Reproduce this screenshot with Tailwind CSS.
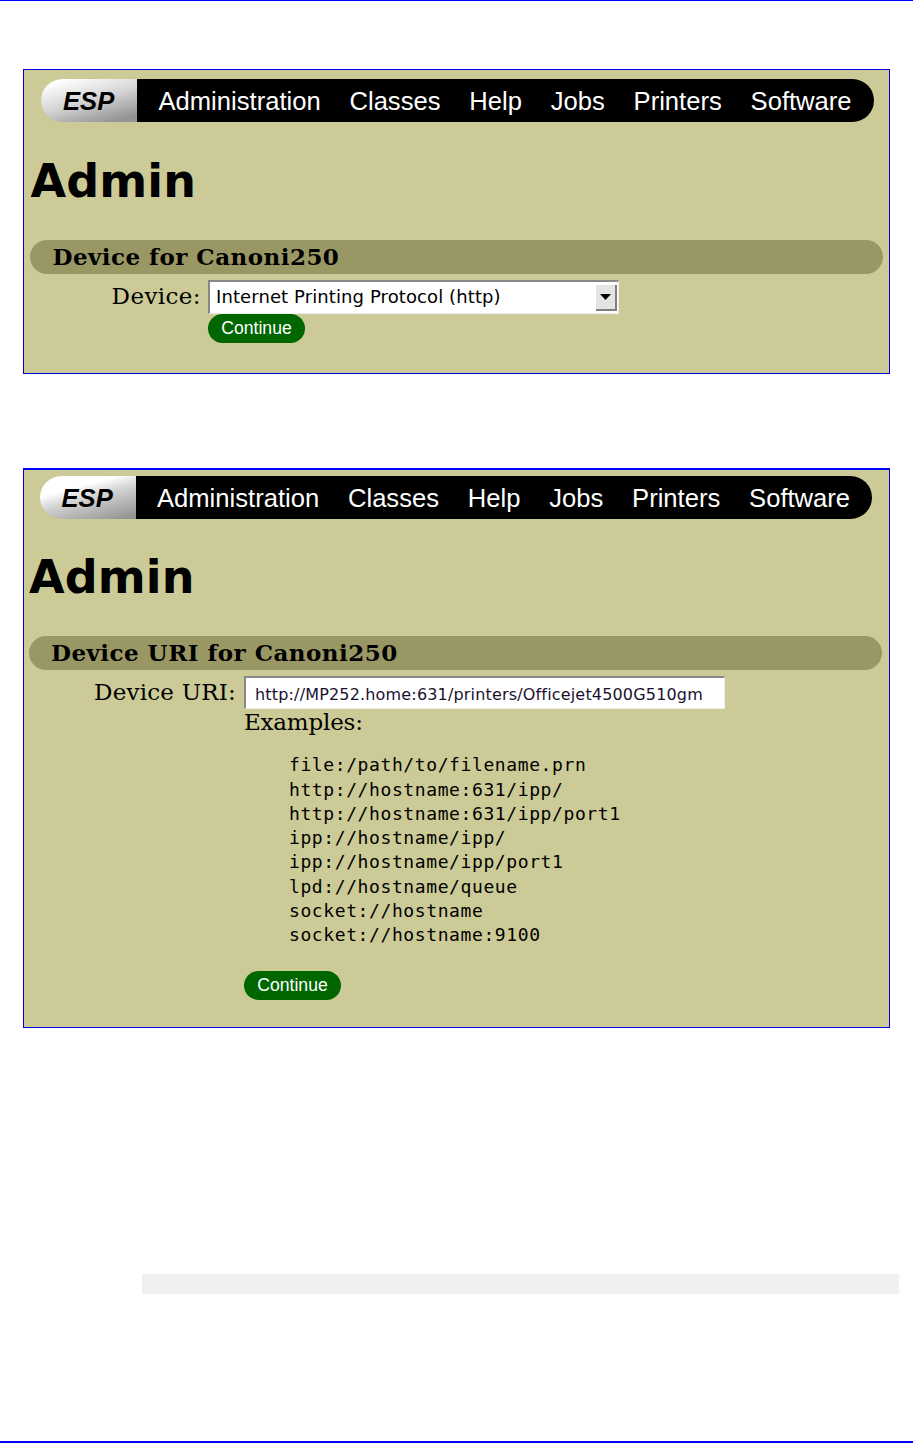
<!DOCTYPE html>
<html lang="en">
<head>
  <meta charset="UTF-8">
  <meta name="viewport" content="width=device-width, initial-scale=1.0">
  <title>Admin</title>
  <script src="https://cdn.jsdelivr.net/npm/@tailwindcss/browser@4"></script>
</head>
<body class="bg-white text-black">
  <div class="flex flex-col h-[1443px] border-t border-b-2 border-[#0000ff] overflow-hidden">

    <!-- Device -->
    <section class="shrink-0 mt-[68px] ml-[23px] w-[867px] h-[305px] border border-[#0000e0] bg-[#cccb97]">
      <nav class="flex mt-[8.5px] ml-[17px] w-[832.5px] h-[43.2px] text-white font-['Liberation_Sans',sans-serif] text-[25.6px] leading-[43px]">
        <div class="w-[96px] pt-[1.5px] pl-[22px] rounded-l-full bg-linear-165 from-white from-10% via-[#d4d4d4] via-50% to-[#949494] to-90% text-black font-bold italic">ESP</div>
        <div class="flex flex-1 gap-[28.8px] pt-[1.5px] pl-[21.5px] rounded-r-full bg-black">
          <a>Administration</a>
          <a>Classes</a>
          <a>Help</a>
          <a>Jobs</a>
          <a>Printers</a>
          <a>Software</a>
        </div>
      </nav>
      <h1 class="mt-[36px] ml-[6.5px] h-[46px] font-['DejaVu_Sans',sans-serif] font-bold text-[46px] leading-[46px] tracking-[0.1px]">Admin</h1>
      <h2 class="mt-[36px] ml-[6px] w-[853px] h-[34.6px] pl-[22.5px] rounded-full bg-[#999864] font-['DejaVu_Serif',serif] font-bold text-[23px] leading-[34px] tracking-[0.47px]">Device for Canoni250</h2>
      <div class="flex mt-[6px]">
        <label class="w-[177px] text-right font-['DejaVu_Serif',serif] text-[23px] leading-[33px] tracking-[0.4px]">Device:</label>
        <div class="ml-[7px]">
          <div class="flex items-center justify-between w-[411px] h-[33.5px] pl-[6px] pr-px bg-white border-t-[2.5px] border-l-[2.5px] border-r border-b border-t-[#888] border-l-[#888] border-r-[#eee] border-b-[#eee] font-['DejaVu_Sans',sans-serif] text-[18px] tracking-[0.1px]">
            <span class="pb-[2px]">Internet Printing Protocol (http)</span>
            <span class="flex items-center justify-center w-[21px] h-[26px] bg-[#e4e4e4] border-r-2 border-b-2 border-[#808080]">
              <svg class="w-[11px] h-[6px]" viewBox="0 0 11 6"><path d="M0 0h11L5.5 6z"/></svg>
            </span>
          </div>
          <button class="block w-[97px] h-[29px] rounded-full bg-[#006600] text-white font-['Liberation_Sans',sans-serif] text-[17.6px] leading-[29px]">Continue</button>
        </div>
      </div>
    </section>

    <!-- Device URI -->
    <section class="shrink-0 mt-[94px] ml-[23px] w-[867px] h-[560px] border border-t-2 border-[#0000e0] border-t-[#0000ff] bg-[#cccb97]">
      <nav class="flex mt-[5.5px] ml-[15.5px] w-[832.5px] h-[43.2px] text-white font-['Liberation_Sans',sans-serif] text-[25.6px] leading-[43px]">
        <div class="w-[96px] pt-[1.5px] pl-[22px] rounded-l-full bg-linear-165 from-white from-30% via-[#d4d4d4] via-50% to-[#949494] to-95% text-black font-bold italic">ESP</div>
        <div class="flex flex-1 gap-[28.8px] pt-[1.5px] pl-[21.5px] rounded-r-full bg-black">
          <a>Administration</a>
          <a>Classes</a>
          <a>Help</a>
          <a>Jobs</a>
          <a>Printers</a>
          <a>Software</a>
        </div>
      </nav>
      <h1 class="mt-[35.5px] ml-[5px] h-[46px] font-['DejaVu_Sans',sans-serif] font-bold text-[46px] leading-[46px] tracking-[0.1px]">Admin</h1>
      <h2 class="mt-[35.5px] ml-[4.5px] w-[853px] h-[34.6px] pl-[22.5px] rounded-full bg-[#999864] font-['DejaVu_Serif',serif] font-bold text-[23px] leading-[34px] tracking-[0.47px]">Device URI for Canoni250</h2>
      <div class="flex mt-[5.5px]">
        <label class="w-[212px] text-right font-['DejaVu_Serif',serif] text-[23px] leading-[32px] tracking-[0.2px]">Device URI:</label>
        <div class="ml-[8px]">
          <div class="w-[481px] h-[33px] pt-[3px] pl-[9px] bg-white border-t-[2.5px] border-l-[2.5px] border-r border-b border-t-[#888] border-l-[#888] border-r-[#eee] border-b-[#eee] font-['DejaVu_Sans',sans-serif] text-[16px] leading-[27px] tracking-[0.17px] text-[#1c1030]">http://MP252.home:631/printers/Officejet4500G510gm</div>
          <p class="font-['DejaVu_Serif',serif] text-[23px] leading-[26px] tracking-[-0.2px]">Examples:</p>
          <pre class="mt-[18.5px] ml-[45px] font-['DejaVu_Sans_Mono',monospace] text-[18px] leading-[24.28px] tracking-[0.6px]">file:/path/to/filename.prn
http://hostname:631/ipp/
http://hostname:631/ipp/port1
ipp://hostname/ipp/
ipp://hostname/ipp/port1
lpd://hostname/queue
socket://hostname
socket://hostname:9100</pre>
          <button class="block mt-[23.5px] w-[97px] h-[29px] rounded-full bg-[#006600] text-white font-['Liberation_Sans',sans-serif] text-[17.6px] leading-[29px]">Continue</button>
        </div>
      </div>
    </section>

    <div class="shrink-0 mt-[246px] ml-[142px] w-[757px] h-[20px] bg-[#f0f0f0]"></div>
  </div>
</body>
</html>
